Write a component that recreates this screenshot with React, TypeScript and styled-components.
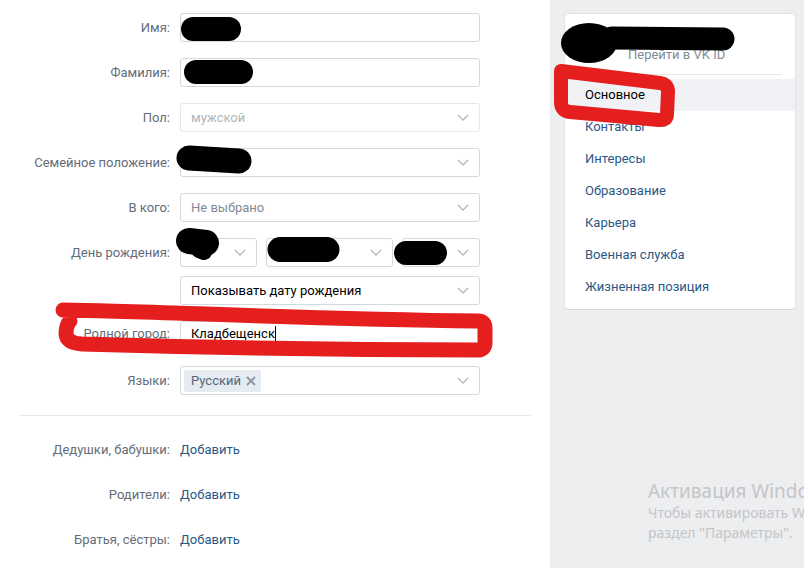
import React from 'react';
import styled, {createGlobalStyle} from 'styled-components';

const GlobalStyle = createGlobalStyle`
  html, body {
    margin: 0;
    padding: 0;
    height: 100%;
    overflow: hidden;
  }
  body {
    font-family: Roboto, "Open Sans", "DejaVu Sans", sans-serif;
    font-size: 13px;
    color: #000;
  }
`;

const Chevron: React.FC = () => (
  <ChevronIcon width="12" height="7" viewBox="0 0 12 7">
    <path d="M1 1l5 5 5-5" fill="none" stroke="#aeb7c2" strokeWidth="1.3" />
  </ChevronIcon>
);

const relatives = ['Дедушки, бабушки:', 'Родители:', 'Братья, сёстры:'];
const menu = [
  'Основное',
  'Контакты',
  'Интересы',
  'Образование',
  'Карьера',
  'Военная служба',
  'Жизненная позиция',
];

const App: React.FC = () => {
  return (
    <Page>
      <GlobalStyle />
      <Main>
        <Form>
          <Row>
            <Label>Имя:</Label>
            <Field />
          </Row>
          <Row>
            <Label>Фамилия:</Label>
            <Field />
          </Row>
          <Row>
            <Label>Пол:</Label>
            <Field $light>
              <FieldText $tone="disabled">мужской</FieldText>
              <Chevron />
            </Field>
          </Row>
          <Row>
            <Label>Семейное положение:</Label>
            <Field>
              <FieldText />
              <Chevron />
            </Field>
          </Row>
          <Row>
            <Label>В кого:</Label>
            <Field>
              <FieldText $tone="muted">Не выбрано</FieldText>
              <Chevron />
            </Field>
          </Row>
          <Row>
            <Label>День рождения:</Label>
            <DateGroup>
              <Field $width={77}>
                <FieldText />
                <Chevron />
              </Field>
              <Field $width={127}>
                <FieldText />
                <Chevron />
              </Field>
              <Field>
                <FieldText />
                <Chevron />
              </Field>
            </DateGroup>
          </Row>
          <Row $tight>
            <Label />
            <Field>
              <FieldText>Показывать дату рождения</FieldText>
              <Chevron />
            </Field>
          </Row>
          <Row>
            <Label $raised>Родной город:</Label>
            <Field $text>
              <FieldText>
                Кладбещенск
                <Caret />
              </FieldText>
            </Field>
          </Row>
          <Row>
            <Label>Языки:</Label>
            <Field $tags>
              <Tag>
                Русский
                <svg width="10" height="10" viewBox="0 0 10 10">
                  <path d="M1 1l8 8M9 1L1 9" stroke="#8a96a3" strokeWidth="1.8" />
                </svg>
              </Tag>
              <Chevron />
            </Field>
          </Row>
        </Form>
        <Divider />
        <Relatives>
          {relatives.map(label => (
            <RelativeRow key={label}>
              <RelativeLabel>{label}</RelativeLabel>
              <AddLink>Добавить</AddLink>
            </RelativeRow>
          ))}
        </Relatives>
      </Main>

      <Side>
        <Card>
          <CardHeader>
            <Avatar />
            <HeaderText>
              <NameLine />
              <IdLink>Перейти в VK ID</IdLink>
            </HeaderText>
          </CardHeader>
          <CardDivider />
          <Menu>
            {menu.map((item, i) => (
              <MenuItem key={item} $active={i === 0}>
                {item}
              </MenuItem>
            ))}
          </Menu>
        </Card>
      </Side>

      <Watermark>
        <WatermarkTitle>Активация Windows</WatermarkTitle>
        <WatermarkText>Чтобы активировать Windows, перейдите в</WatermarkText>
        <WatermarkText>раздел "Параметры".</WatermarkText>
      </Watermark>

      {/* hand-drawn marks over the screenshot */}
      <Marks width="804" height="568" viewBox="0 0 804 568">
        <g stroke="#000" strokeLinecap="round" fill="none">
          <path d="M193 29L229 29" strokeWidth="24" />
          <path d="M196 72L241 72" strokeWidth="24" />
          <path d="M189 158L239 161" strokeWidth="25" />
          <path d="M189 241L206 243" strokeWidth="26" />
          <path d="M199 250L204 252" strokeWidth="16" />
          <path d="M280 249.5L327 249.5" strokeWidth="25" />
          <path d="M406 253L435 253" strokeWidth="24" />
          <path d="M612 38L723 39" strokeWidth="23" />
        </g>
        <ellipse cx="589" cy="43" rx="28" ry="20" fill="#000" />
        <g
          stroke="#e51e1e"
          fill="none"
          strokeLinecap="round"
          strokeLinejoin="round"
        >
          <path
            d="M63 310C150 311 300 319 478 321Q485 321 485 328L485 343Q485 350 477 350C300 350 150 346 82 344Q67 343 66 334Q66 325 70 321"
            strokeWidth="15"
          />
          <path
            d="M561 71L660 83Q668 84 668 92L667 114Q667 121 659 120L570 112Q561 111 561 102Z"
            strokeWidth="14"
          />
        </g>
      </Marks>
    </Page>
  );
};

const Page = styled.div`
  position: relative;
  display: flex;
  width: 804px;
  height: 568px;
  overflow: hidden;
  background: #edeef0;
`;

const Main = styled.div`
  width: 550px;
  flex-shrink: 0;
  background: #fff;
`;

const Form = styled.div`
  display: flex;
  flex-direction: column;
  gap: 16px;
  padding-top: 13px;
`;

const Row = styled.div<{$tight?: boolean}>`
  display: grid;
  grid-template-columns: 170px 300px;
  column-gap: 10px;
  align-items: center;
  margin-top: ${p => (p.$tight ? '-7px' : '0')};
`;

const Label = styled.div<{$raised?: boolean}>`
  align-self: ${p => (p.$raised ? 'start' : 'center')};
  text-align: right;
  color: #626d7a;
  line-height: ${p => (p.$raised ? '25px' : '29px')};
  white-space: nowrap;
`;

const Field = styled.div<{
  $light?: boolean;
  $width?: number;
  $tags?: boolean;
  $text?: boolean;
}>`
  box-sizing: border-box;
  display: flex;
  align-items: center;
  justify-content: space-between;
  height: 29px;
  ${p => (p.$width ? `width: ${p.$width}px; flex-shrink: 0;` : 'flex: 1;')}
  padding: ${p => (p.$tags ? '0 10px 0 3px' : '0 10px 0 10px')};
  padding-bottom: ${p => (p.$text ? '4px' : '0')};
  border: 1px solid ${p => (p.$light ? '#e7e8ec' : '#d3d9de')};
  border-radius: 3px;
  background: #fff;
`;

const FieldText = styled.span<{$tone?: 'muted' | 'disabled'}>`
  display: flex;
  align-items: center;
  color: ${p =>
    p.$tone === 'disabled' ? '#b1b5ba' : p.$tone === 'muted' ? '#828a94' : '#000'};
`;

const Caret = styled.span`
  display: inline-block;
  width: 1px;
  height: 15px;
  background: #000;
`;

const ChevronIcon = styled.svg`
  flex-shrink: 0;
`;

const DateGroup = styled.div`
  display: flex;
  gap: 9px;
`;

const Tag = styled.span`
  display: inline-flex;
  align-items: center;
  gap: 5px;
  height: 22px;
  padding: 0 5px 0 7px;
  border-radius: 2px;
  background: #e5ebf1;
  color: #55677d;
`;

const Divider = styled.div`
  margin: 20px 19px 0;
  border-top: 1px solid #e7e8ec;
`;

const Relatives = styled.div`
  display: flex;
  flex-direction: column;
  gap: 16px;
  padding-top: 19px;
`;

const RelativeRow = styled.div`
  display: grid;
  grid-template-columns: 170px auto;
  column-gap: 10px;
  height: 29px;
  align-items: center;
`;

const RelativeLabel = styled.div`
  text-align: right;
  color: #656d78;
`;

const AddLink = styled.a`
  color: #2a5885;
  cursor: pointer;
`;

const Side = styled.aside`
  flex: 1;
  padding: 14px 9px 0 15px;
`;

const Card = styled.div`
  background: #fff;
  border-radius: 4px;
  box-shadow: 0 1px 0 0 #d7d8db, 0 0 0 1px #e3e4e8;
  padding-bottom: 6px;
`;

const CardHeader = styled.div`
  display: flex;
  align-items: flex-start;
  gap: 14px;
  padding: 6px 13px 0;
  height: 54px;
`;

const Avatar = styled.div`
  width: 36px;
  height: 36px;
  margin-top: 4px;
  border-radius: 50%;
  background: #dfe3e8;
`;

const HeaderText = styled.div`
  display: flex;
  flex-direction: column;
  padding-top: 8px;
`;

const NameLine = styled.div`
  height: 18px;
`;

const IdLink = styled.div`
  color: #818c99;
  line-height: 17px;
`;

const CardDivider = styled.div`
  margin: 0 13px;
  border-top: 1px solid #e7e8ec;
`;

const Menu = styled.div`
  padding-top: 4px;
`;

const MenuItem = styled.div<{$active?: boolean}>`
  height: 32px;
  line-height: 32px;
  padding-left: ${p => (p.$active ? '18px' : '20px')};
  border-left: ${p => (p.$active ? '2px solid #5181b8' : 'none')};
  background: ${p => (p.$active ? '#f0f2f5' : 'transparent')};
  color: ${p => (p.$active ? '#000' : '#2a5885')};
`;

const Watermark = styled.div`
  position: absolute;
  left: 648px;
  top: 479px;
  white-space: nowrap;
  font-family: "Noto Sans", "Open Sans", sans-serif;
  color: #c4c5c8;
  pointer-events: none;
`;

const WatermarkTitle = styled.div`
  font-size: 19px;
  line-height: 24px;
`;

const WatermarkText = styled.div`
  font-size: 14px;
  line-height: 20px;
`;

const Marks = styled.svg`
  position: absolute;
  left: 0;
  top: 0;
  pointer-events: none;
`;

export default App;
